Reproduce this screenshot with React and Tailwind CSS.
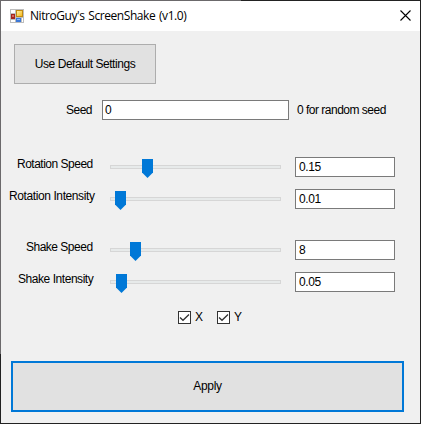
import React from "react";

function FormIcon() {
  return (
    <svg width="14" height="14" viewBox="0 0 14 14" shapeRendering="crispEdges" className="block shrink-0">
      <defs>
        <linearGradient id="gold" x1="0" y1="0" x2="1" y2="1">
          <stop offset="0" stopColor="#fff0a0" />
          <stop offset="1" stopColor="#f5b81c" />
        </linearGradient>
      </defs>
      <rect width="14" height="14" fill="#bdbdbd" />
      <rect x="1" y="1" width="4" height="3" fill="#fff" />
      <rect x="1" y="11" width="4" height="2" fill="#fff" />
      <rect x="12" y="9" width="1" height="4" fill="#fff" />
      <rect x="1" y="5" width="4" height="5" fill="#a5251d" />
      <rect x="2" y="6" width="2" height="2" fill="#d7665c" />
      <rect x="6" y="1" width="7" height="7" fill="#c18a10" />
      <rect x="7" y="2" width="5" height="5" fill="url(#gold)" />
      <rect x="6" y="9" width="5" height="4" fill="#3b78d8" />
      <rect x="7" y="10" width="3" height="1" fill="#8dbaf5" />
    </svg>
  );
}

function TextBox({ value, className }) {
  return (
    <div className={`flex h-5 shrink-0 items-center border border-[#7a7a7a] bg-white tracking-[-0.4px] ${className}`}>
      <span>{value}</span>
    </div>
  );
}

function Slider({ thumb }) {
  return (
    <div className="grid h-[19px] w-[171px] shrink-0 items-start">
      <div className="col-start-1 row-start-1 mt-1.5 h-1 border border-[#d6d6d6] bg-[#e7eaea]" />
      <svg width="11" height="19" viewBox="0 0 11 19" className={`z-10 col-start-1 row-start-1 ${thumb}`}>
        <path d="M0 0H11V13.5L5.5 19L0 13.5Z" fill="#0078d7" />
      </svg>
    </div>
  );
}

function SettingRow({ label, pad, thumb, value }) {
  return (
    <div className="flex h-5 items-start">
      <div className={`w-[109px] shrink-0 whitespace-nowrap leading-[14px] ${pad}`}>{label}</div>
      <div className="pt-0.5">
        <Slider thumb={thumb} />
      </div>
      <TextBox value={value} className="ml-3.5 w-[100px] pl-[3px]" />
    </div>
  );
}

function CheckBox({ label }) {
  return (
    <div className="flex w-[39px] items-center">
      <svg width="13" height="13" viewBox="0 0 13 13" className="shrink-0">
        <rect x="0.5" y="0.5" width="12" height="12" fill="#fff" stroke="#333" />
        <path d="M2 6.5L5 9.3L11 3.5" fill="none" stroke="#333" strokeWidth="1.3" />
      </svg>
      <span className="ml-1 pb-0.5 leading-[14px]">{label}</span>
    </div>
  );
}

export default function App() {
  return (
    <div className="flex h-[424px] w-[421px] flex-col overflow-hidden bg-[#f0f0f0] font-['Liberation_Sans',sans-serif] text-[12px] tracking-[-0.5px] text-black">
      <div className="flex h-px shrink-0">
        <div className="w-[241px] bg-[#6b696b]" />
        <div className="flex-1 bg-[#222]" />
      </div>
      <div className="flex h-[422px] shrink-0">
        <div className="flex w-px shrink-0 flex-col">
          <div className="h-[353px] bg-[#6b696b]" />
          <div className="flex-1 bg-[#222]" />
        </div>
        <div className="flex w-[419px] flex-col">
          <div className="flex h-[30px] shrink-0 items-center bg-white pl-[9px] pr-[9px]">
            <FormIcon />
            <div className="ml-1.5 whitespace-nowrap font-['Open_Sans',sans-serif] text-[12px] leading-4 tracking-[-0.43px] [word-spacing:1px]">
              NitroGuy's ScreenShake (v1.0)
            </div>
            <svg width="11" height="11" viewBox="0 0 11 11" className="mb-px ml-auto">
              <path d="M0.5 0.5L10.5 10.5M10.5 0.5L0.5 10.5" stroke="#000" strokeWidth="1.1" fill="none" />
            </svg>
          </div>

          <div className="ml-[13px] mt-[13px] flex h-10 w-[142px] shrink-0 items-center justify-center border border-[#adadad] bg-[#e1e1e1]">
            <span className="whitespace-nowrap tracking-[-0.45px]">Use Default Settings</span>
          </div>

          <div className="mt-4 flex h-5 shrink-0 items-center">
            <div className="w-[101px] shrink-0 pl-[65px]">Seed</div>
            <TextBox value="0" className="w-[187px] pl-0.5" />
            <div className="ml-2 whitespace-nowrap">0 for random seed</div>
          </div>

          <div className="mt-[37px] flex shrink-0 flex-col gap-3">
            <SettingRow label="Rotation Speed" pad="pl-4" thumb="ml-8" value="0.15" />
            <SettingRow label="Rotation Intensity" pad="pl-2 tracking-[-0.4px]" thumb="ml-[5px]" value="0.01" />
          </div>

          <div className="mt-[31px] flex shrink-0 flex-col gap-3">
            <SettingRow label="Shake Speed" pad="pl-[25px]" thumb="ml-5" value="8" />
            <SettingRow label="Shake Intensity" pad="pl-[17px] tracking-[-0.45px]" thumb="ml-1.5" value="0.05" />
          </div>

          <div className="ml-[177px] mt-[19px] flex h-[13px] shrink-0 items-center">
            <CheckBox label="X" />
            <CheckBox label="Y" />
          </div>

          <div className="ml-2.5 mt-[37px] flex h-[51px] w-[393px] shrink-0 items-center justify-center border-2 border-[#0078d7] bg-[#e1e1e1] pb-0.5">
            <span className="tracking-[-0.3px]">Apply</span>
          </div>
        </div>
        <div className="w-px shrink-0 bg-[#222]" />
      </div>
      <div className="h-px shrink-0 bg-[#222]" />
    </div>
  );
}
